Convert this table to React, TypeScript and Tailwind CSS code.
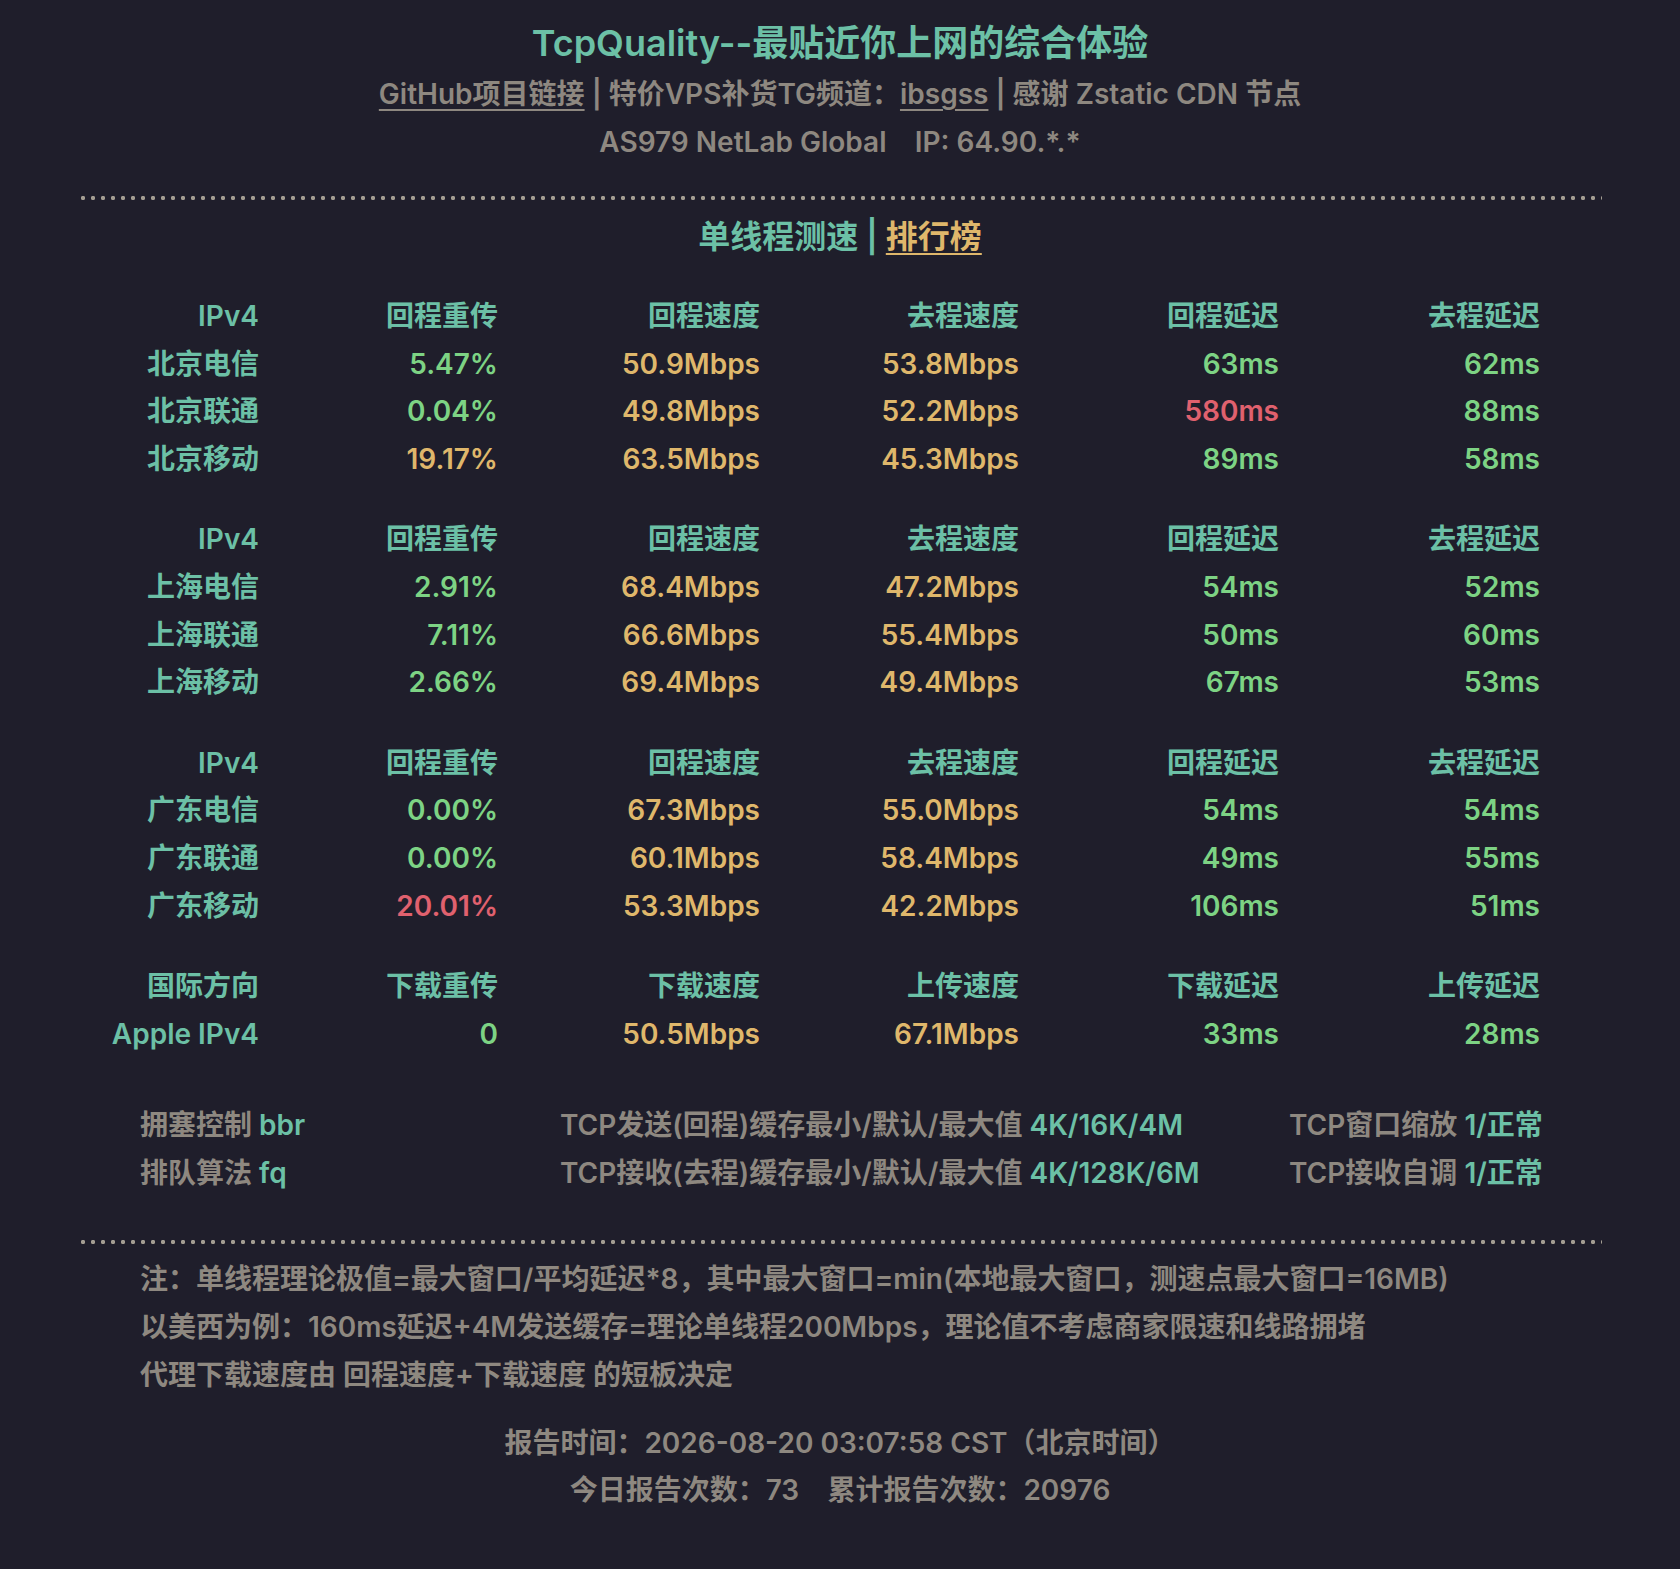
import React from "react";

type Cell = { text: string; tone: "teal" | "green" | "gold" | "red" };

interface Group {
  header: string[];
  rows: Cell[][];
}

const toneClass: Record<Cell["tone"], string> = {
  teal: "text-[#6cc0a6]",
  green: "text-[#7dd384]",
  gold: "text-[#dfb76b]",
  red: "text-[#e0616e]",
};

// build a data row: label, retrans, speed in, speed out, latency in, latency out
function row(label: string, retrans: string, rTone: Cell["tone"], s1: string, s2: string, l1: string, l1Tone: Cell["tone"], l2: string): Cell[] {
  return [
    { text: label, tone: "teal" },
    { text: retrans, tone: rTone },
    { text: s1, tone: "gold" },
    { text: s2, tone: "gold" },
    { text: l1, tone: l1Tone },
    { text: l2, tone: "green" },
  ];
}

const ipv4Header = ["IPv4", "回程重传", "回程速度", "去程速度", "回程延迟", "去程延迟"];

const groups: Group[] = [
  {
    header: ipv4Header,
    rows: [
      row("北京电信", "5.47%", "green", "50.9Mbps", "53.8Mbps", "63ms", "green", "62ms"),
      row("北京联通", "0.04%", "green", "49.8Mbps", "52.2Mbps", "580ms", "red", "88ms"),
      row("北京移动", "19.17%", "gold", "63.5Mbps", "45.3Mbps", "89ms", "green", "58ms"),
    ],
  },
  {
    header: ipv4Header,
    rows: [
      row("上海电信", "2.91%", "green", "68.4Mbps", "47.2Mbps", "54ms", "green", "52ms"),
      row("上海联通", "7.11%", "green", "66.6Mbps", "55.4Mbps", "50ms", "green", "60ms"),
      row("上海移动", "2.66%", "green", "69.4Mbps", "49.4Mbps", "67ms", "green", "53ms"),
    ],
  },
  {
    header: ipv4Header,
    rows: [
      row("广东电信", "0.00%", "green", "67.3Mbps", "55.0Mbps", "54ms", "green", "54ms"),
      row("广东联通", "0.00%", "green", "60.1Mbps", "58.4Mbps", "49ms", "green", "55ms"),
      row("广东移动", "20.01%", "red", "53.3Mbps", "42.2Mbps", "106ms", "green", "51ms"),
    ],
  },
  {
    header: ["国际方向", "下载重传", "下载速度", "上传速度", "下载延迟", "上传延迟"],
    rows: [row("Apple IPv4", "0", "green", "50.5Mbps", "67.1Mbps", "33ms", "green", "28ms")],
  },
];

const config = [
  [
    ["拥塞控制", "bbr"],
    ["TCP发送(回程)缓存最小/默认/最大值", "4K/16K/4M"],
    ["TCP窗口缩放", "1/正常"],
  ],
  [
    ["排队算法", "fq"],
    ["TCP接收(去程)缓存最小/默认/最大值", "4K/128K/6M"],
    ["TCP接收自调", "1/正常"],
  ],
];

const notes = [
  "注：单线程理论极值=最大窗口/平均延迟*8，其中最大窗口=min(本地最大窗口，测速点最大窗口=16MB)",
  "以美西为例：160ms延迟+4M发送缓存=理论单线程200Mbps，理论值不考虑商家限速和线路拥堵",
  "代理下载速度由 回程速度+下载速度 的短板决定",
];

function Dots({ className }: { className: string }) {
  return (
    <div
      className={`h-[6px] bg-[radial-gradient(circle,#a39d92_1.9px,transparent_2.4px)] bg-[length:10px_6px] ${className}`}
    />
  );
}

export default function App() {
  return (
    <div className="min-h-screen bg-[#1f1e2b] px-[78px] pt-[19px] pb-[56px] font-['Inter','Noto_Sans_CJK_SC',sans-serif] font-semibold text-[28px] text-[#8e8880]">
      {/* header */}
      <h1 className="h-[48px] text-center text-[36px] leading-[48px] text-[#6cc0a6]">
        TcpQuality--最贴近你上网的综合体验
      </h1>
      <div className="mt-[3px] h-[48px] text-center leading-[48px]">
        <a className="underline underline-offset-[5px] decoration-2">GitHub项目链接</a> | 特价VPS补货TG频道：
        <a className="underline underline-offset-[5px] decoration-2">ibsgss</a> | 感谢 Zstatic CDN 节点
      </div>
      <div className="h-[48px] text-center leading-[48px] whitespace-pre">AS979 NetLab Global    IP: 64.90.*.*</div>

      <Dots className="mt-[29px]" />

      <div className="mt-[12px] h-[48px] text-center text-[32px] leading-[48px] text-[#6cc0a6]">
        单线程测速 |{" "}
        <a className="text-[#dfb76b] underline underline-offset-[5px] decoration-2">排行榜</a>
      </div>

      {/* speed table */}
      <div className="mt-[32px] flex flex-col gap-[33px]">
        {groups.map((g, gi) => (
          <div key={gi} className="grid grid-cols-[181px_239px_262px_259px_260px_261px]">
            {g.header.map((h) => (
              <div key={h} className="h-[47.6px] text-right leading-[47.6px] text-[#6cc0a6]">
                {h}
              </div>
            ))}
            {g.rows.map((r, ri) =>
              r.map((c, ci) => (
                <div key={`${ri}-${ci}`} className={`h-[47.6px] text-right leading-[47.6px] ${toneClass[c.tone]}`}>
                  {c.text}
                </div>
              ))
            )}
          </div>
        ))}
      </div>

      {/* system config */}
      <div className="mt-[43px] grid grid-cols-[420px_729px_1fr] pl-[62px]">
        {config.map((line, li) =>
          line.map(([label, value], ci) => (
            <div key={`${li}-${ci}`} className="h-[48px] whitespace-nowrap leading-[48px]">
              {label} <span className="text-[#6cc0a6]">{value}</span>
            </div>
          ))
        )}
      </div>

      <Dots className="mt-[42px]" />

      <div className="mt-[10px] pl-[62px]">
        {notes.map((n) => (
          <div key={n} className="h-[48px] whitespace-nowrap leading-[48px]">
            {n}
          </div>
        ))}
      </div>

      <div className="mt-[21px] text-center">
        <div className="h-[47px] leading-[47px]">报告时间：2026-08-20 03:07:58 CST（北京时间）</div>
        <div className="h-[47px] leading-[47px] whitespace-pre">今日报告次数：73    累计报告次数：20976</div>
      </div>
    </div>
  );
}
